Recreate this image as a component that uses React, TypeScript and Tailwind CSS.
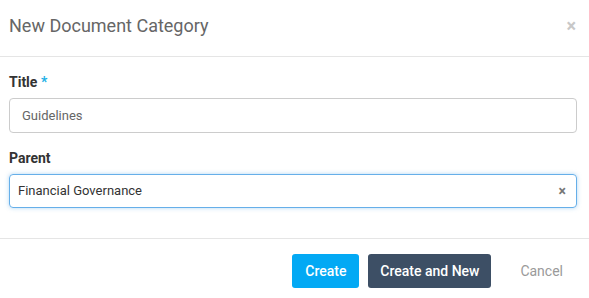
import React from "react";

export default function App() {
  return (
    <div className="w-[589px] h-[298px] bg-white overflow-hidden" style={{ fontFamily: "Roboto, 'Liberation Sans', sans-serif" }}>
      <div className="h-[57px] px-[9px] flex items-center justify-between border-b border-[#e5e5e5]">
        <div className="text-[18px] text-[#666666] font-normal leading-none pb-[4px]">New Document Category</div>
        <div className="text-[#c8c8c8] text-[18px] leading-none pr-[4px] pb-[4px] font-bold">×</div>
      </div>
      <div className="px-[9px] pt-[15px] pb-[30px]">
        <div className="text-[14px] font-bold text-[#333333] leading-[20px] mb-[6px]">
          Title <span className="text-[#1cb0e6]">*</span>
        </div>
        <div className="h-[35px] w-[568px] border border-[#cccccc] rounded-[4px] flex items-center pl-[12px] text-[13px] text-[#666666]">
          Guidelines
        </div>
        <div className="text-[14px] font-bold text-[#333333] leading-[20px] mt-[15px] mb-[6px]">Parent</div>
        <div className="h-[34px] w-[568px] border border-[#66afe9] rounded-[4px] flex items-center justify-between pl-[8px] pr-[10px] text-[13px] text-[#333333] shadow-[0_0_4px_rgba(102,175,233,0.5)]">
          <span>Financial Governance</span>
          <span className="text-[#777777] text-[14px] font-bold leading-none">×</span>
        </div>
      </div>
      <div className="border-t border-[#e5e5e5] pt-[15px] pr-[12px] flex justify-end items-center gap-[9px]">
        <button className="h-[34px] w-[67px] rounded-[3px] bg-[#03a9f4] text-white text-[14px] font-medium">Create</button>
        <button className="h-[34px] w-[123px] rounded-[3px] bg-[#3d4f65] text-white text-[14px] font-medium">Create and New</button>
        <button className="h-[34px] px-[14px] ml-[6px] text-[#9a9a9a] text-[14px]">Cancel</button>
      </div>
    </div>
  );
}
